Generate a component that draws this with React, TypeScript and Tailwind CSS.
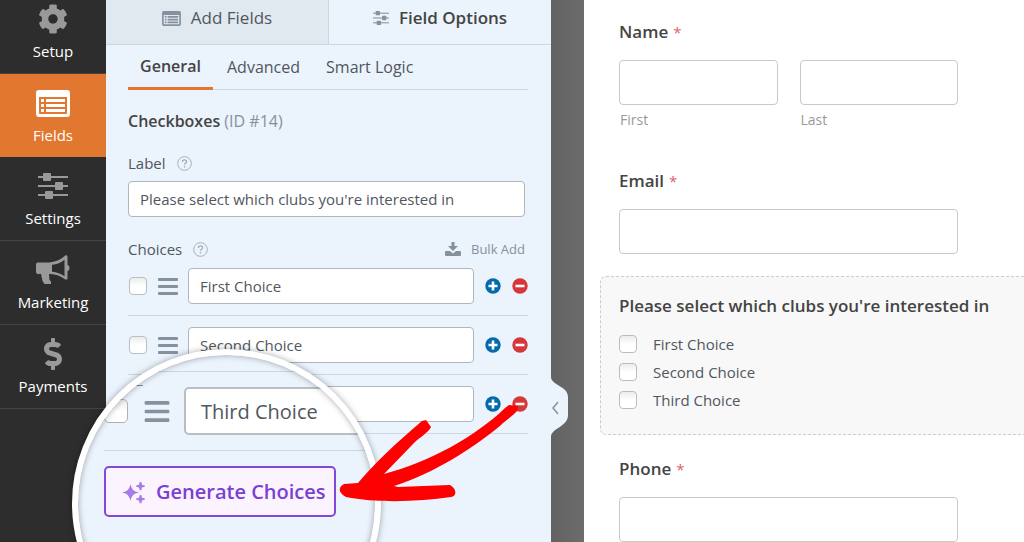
import { ReactNode } from "react";
import { FaCog, FaDollarSign } from "react-icons/fa";

const choices = ["First Choice", "Second Choice", "Third Choice"];

function SlidersIcon({ className }: { className?: string }) {
  return (
    <svg viewBox="0 0 30 26" fill="currentColor" className={className} aria-hidden="true">
      <rect x="0" y="3" width="30" height="2" />
      <rect x="0" y="12" width="30" height="2" />
      <rect x="0" y="21" width="30" height="2" />
      <rect x="5" y="0" width="8" height="8" rx="1" />
      <rect x="17" y="9" width="8" height="8" rx="1" />
      <rect x="7" y="18" width="8" height="8" rx="1" />
    </svg>
  );
}

function ListIcon({ className }: { className?: string }) {
  return (
    <svg viewBox="0 0 34 27" fill="currentColor" className={className} aria-hidden="true">
      <path
        fillRule="evenodd"
        d="M3 0h28a3 3 0 0 1 3 3v21a3 3 0 0 1-3 3H3a3 3 0 0 1-3-3V3a3 3 0 0 1 3-3zM3 7v16a1 1 0 0 0 1 1h26a1 1 0 0 0 1-1V7z"
      />
      <path d="M5 9h3v3H5zM10 9h19v3H10zM5 14h3v3H5zM10 14h19v3H10zM5 19h3v3H5zM10 19h19v3H10z" />
    </svg>
  );
}

function MegaphoneIcon({ className }: { className?: string }) {
  return (
    <svg viewBox="0 0 34 30" fill="currentColor" className={className} aria-hidden="true">
      <path d="M2 7.500h13v11.500h-2l.5 6 1.500 1.500V29H8.500L6.500 26 5 19H2a2 2 0 0 1-2-2V9.500a2 2 0 0 1 2-2z" />
      <path
        fillRule="evenodd"
        d="M14 7.500C20 6.500 25 4.500 29 .7c1-.9 2.500-.3 2.500 1v8.300c1.300.2 2 1.500 2 3s-.7 2.800-2 3v7.300c0 1.300-1.500 1.900-2.500 1C25 21 20 19.500 14 19zM16 9.800v6.900c5 .6 9 2 12.500 4.600V4.700C25 7.500 21 9.200 16 9.800z"
      />
    </svg>
  );
}

function BarsIcon({ className }: { className?: string }) {
  return (
    <svg viewBox="0 0 20 17" fill="currentColor" className={className} aria-hidden="true">
      <rect y="0" width="20" height="3" rx="1" />
      <rect y="7" width="20" height="3" rx="1" />
      <rect y="14" width="20" height="3" rx="1" />
    </svg>
  );
}

function HelpIcon() {
  return (
    <svg viewBox="0 0 16 16" className="size-[15px] text-[#a3abb5]" fill="none" stroke="currentColor" aria-hidden="true">
      <circle cx="8" cy="8" r="7.300" />
      <path d="M5.800 6.300c0-1.400 1-2.200 2.200-2.200s2.200.8 2.200 2c0 1.500-2.200 1.600-2.200 3.200" strokeWidth="1.400" />
      <circle cx="8" cy="11.500" r=".5" fill="currentColor" />
    </svg>
  );
}

function DownloadIcon() {
  return (
    <svg viewBox="0 0 16 14" className="h-[14px] w-4" fill="currentColor" aria-hidden="true">
      <path d="M6.500 0h3v4H13L8 9 3 4h3.500z" />
      <path d="M1 9h4l3 2.500L11 9h4a1 1 0 0 1 1 1v3a1 1 0 0 1-1 1H1a1 1 0 0 1-1-1v-3a1 1 0 0 1 1-1z" />
    </svg>
  );
}

function SparkleIcon() {
  return (
    <svg viewBox="0 0 24 24" className="size-6 shrink-0 text-[#a77be8]" fill="currentColor" aria-hidden="true">
      <path d="M8.500 4C9.500 9 11.500 11.500 17 12.500 11.500 13.500 9.500 16 8.500 21 7.500 16 5.500 13.500 0 12.500 5.500 11.500 7.500 9 8.500 4z" />
      <path d="M17.700 2h1.600l.7 2.800 2.800.7v1.300l-2.800.7-.7 2.700h-1.600L17 7.500l-2.800-.7V5.500l2.800-.7z" />
      <path d="M17.700 15h1.600l.7 2.800 2.800.7v1.300l-2.800.7-.7 2.700h-1.600l-.7-2.700-2.800-.7v-1.300l2.800-.7z" />
    </svg>
  );
}

function NavItem({ label, active, children }: { label: string; active?: boolean; children: ReactNode }) {
  return (
    <a
      href="#"
      className={
        active
          ? "flex h-[83px] flex-col items-center bg-[#e27730] pt-[13px] text-white"
          : "flex h-[84px] flex-col items-center border-b border-[#444] pt-[13px] text-[#999]"
      }
    >
      <span className="flex h-8 items-center">{children}</span>
      <span className="mt-1 text-[15px] leading-6 text-white">{label}</span>
    </a>
  );
}

function Checkbox({ label }: { label: string }) {
  return (
    <input
      type="checkbox"
      aria-label={label}
      className="size-[18px] shrink-0 appearance-none rounded-[4px] border border-[#b9bec4] bg-linear-to-b from-[#ececec] to-white to-50%"
    />
  );
}

function ChoiceRow({ label }: { label: string }) {
  return (
    <li className="flex h-[59px] items-center border-b border-[#ced7e0] pl-px">
      <Checkbox label={"Default " + label} />
      <BarsIcon className="ml-[11px] h-[17px] w-5 shrink-0 text-[#86919e]" />
      <input
        type="text"
        aria-label="Choice"
        defaultValue={label}
        className="ml-[10px] h-9 min-w-0 flex-1 rounded-[4px] border border-[#b0b6bd] bg-white px-[11px] text-[15px]"
      />
      <button type="button" aria-label="Add choice" className="ml-[11px]">
        <svg viewBox="0 0 16 16" className="size-4">
          <circle cx="8" cy="8" r="7.700" fill="#036aab" />
          <path d="M8 3.500v9M3.500 8h9" stroke="#fff" strokeWidth="2.600" />
        </svg>
      </button>
      <button type="button" aria-label="Remove choice" className="ml-[11px]">
        <svg viewBox="0 0 16 16" className="size-4">
          <circle cx="8" cy="8" r="7.700" fill="#d63638" />
          <path d="M3.500 8h9" stroke="#fff" strokeWidth="2.600" />
        </svg>
      </button>
    </li>
  );
}

function Magnifier() {
  return (
    <div className="absolute top-[349px] left-[72px] size-[309px] overflow-hidden rounded-full border-6 border-white bg-[#ebf3fc] shadow-[0_0_6px_rgba(0,0,0,0.35)]">
      <div className="mt-[16px] ml-[26px] w-[320px]">
        <div className="flex h-20 items-center border-y border-[#ced7e0]">
          <input
            type="checkbox"
            aria-label="Default third choice"
            className="size-6 shrink-0 appearance-none rounded-[5px] border border-[#b0b0b0] bg-linear-to-b from-[#ececec] to-white to-50%"
          />
          <BarsIcon className="ml-4 h-[21px] w-[26px] shrink-0 text-[#86919e]" />
          <input
            type="text"
            aria-label="Third choice"
            defaultValue="Third Choice"
            className="ml-[14px] h-12 w-[240px] shrink-0 rounded-[5px] border-2 border-[#b9bec4] bg-white px-[15px] text-[20px]"
          />
        </div>
        <button
          type="button"
          className="mt-[15px] flex h-[51px] w-[232px] items-center gap-[10px] rounded-[5px] border-2 border-[#8348d8] bg-[#fbf3fe] pl-4 text-[20px] font-semibold whitespace-nowrap text-[#7a3fd3]"
        >
          <SparkleIcon />
          Generate Choices
        </button>
      </div>
      {/* end of the drag handle of the row above */}
      <div className="absolute top-[25px] left-[57px] h-[6px] w-2 border-y border-[#86919e]" />
      <div className="pointer-events-none absolute inset-0 rounded-full shadow-[inset_0_0_6px_rgba(0,0,0,0.35)]" />
    </div>
  );
}

function Arrow() {
  return (
    <svg viewBox="0 0 180 100" className="pointer-events-none absolute top-[403px] left-[338px] h-[100px] w-[180px]" fill="#fe0000" aria-hidden="true">
      <path d="M84 18 88 17 93 24C90 30 82 34 76 40L46 71C91 59 137 34 167 5L171 2 180 3C183 8 168 17 163 22C133 47 96 70 56 83L60 84 112 82C119 86 119 93 113 94C79 99 38 100 8 94C0 90 0 84 6 81L20 80C36 61 59 39 84 18Z" />
    </svg>
  );
}

function TextField({ label, sublabel }: { label: string; sublabel?: string }) {
  return (
    <label className="block min-w-0 flex-1">
      <input
        type="text"
        aria-label={label}
        className="block h-[45px] w-full rounded-[4px] border border-[#c9c9c9] bg-white px-3 text-[15px]"
      />
      {sublabel ? <span className="mt-[3px] block pl-px text-[14px] leading-6 text-[#999]">{sublabel}</span> : null}
    </label>
  );
}

function FieldTitle({ children, required }: { children: ReactNode; required?: boolean }) {
  return (
    <h3 className="text-[17px] leading-6 font-semibold text-[#444]">
      {children}
      {required ? <span className="ml-[5px] text-[15px] font-normal text-[#e0606a]">*</span> : null}
    </h3>
  );
}

export default function App() {
  return (
    <div className="relative flex h-screen overflow-hidden bg-[#676767] font-['Open_Sans','Noto_Sans',sans-serif] text-[#50575e]">
      <nav className="w-[106px] shrink-0 bg-[#2d2d2d]">
        <div className="-mt-[10px]">
          <NavItem label="Setup">
            <FaCog className="size-[30px]" />
          </NavItem>
          <NavItem label="Fields" active>
            <ListIcon className="h-[27px] w-[34px]" />
          </NavItem>
          <NavItem label="Settings">
            <SlidersIcon className="h-[26px] w-[30px]" />
          </NavItem>
          <NavItem label="Marketing">
            <MegaphoneIcon className="h-[30px] w-[34px]" />
          </NavItem>
          <NavItem label="Payments">
            <FaDollarSign className="size-8" />
          </NavItem>
        </div>
      </nav>

      <section className="w-[445px] shrink-0 bg-[#ebf3fc]">
        <div className="flex h-[45px] border-b border-[#ced7e0] text-[17px]">
          <button type="button" className="flex flex-1 items-center justify-center gap-[10px] border-r border-[#ced7e0] bg-[#e0e8f0] pb-2">
            <ListIcon className="h-[15px] w-[19px] text-[#86919e]" />
            Add Fields
          </button>
          <button type="button" className="flex flex-1 items-center justify-center gap-[10px] pb-2 font-semibold text-[#444]">
            <SlidersIcon className="h-[14px] w-4 text-[#86919e]" />
            Field Options
          </button>
        </div>

        <div className="pr-[23px] pl-[22px]">
          <div className="flex h-[45px] border-b border-[#ced7e0] text-[16px]">
            <button type="button" className="-mb-px w-[85px] border-b-3 border-[#e27730] font-semibold text-[#444]">
              General
            </button>
            <button type="button" className="ml-[14px]">Advanced</button>
            <button type="button" className="ml-[26px]">Smart Logic</button>
          </div>

          <h2 className="mt-[19px] text-[16px] leading-6 font-semibold text-[#444]">
            Checkboxes <span className="font-normal text-[#86919e]">(ID #14)</span>
          </h2>

          <div className="mt-[18px] flex items-center gap-[11px] text-[15px] leading-6">
            <label htmlFor="field-label">Label</label>
            <HelpIcon />
          </div>
          <div className="mt-[6px] pr-[3px]">
            <input
              id="field-label"
              type="text"
              defaultValue="Please select which clubs you're interested in"
              className="block h-9 w-full rounded-[4px] border border-[#b0b6bd] bg-white px-[11px] text-[15px]"
            />
          </div>

          <div className="mt-5 flex items-center gap-[11px] pr-[3px] text-[15px] leading-6">
            <span>Choices</span>
            <HelpIcon />
            <button type="button" className="ml-auto flex items-center gap-[10px] text-[13px] text-[#86919e]">
              <DownloadIcon />
              Bulk Add
            </button>
          </div>
          <ul className="-mt-[4px]">
            {choices.map((choice) => (
              <ChoiceRow key={choice} label={choice} />
            ))}
          </ul>
        </div>
      </section>

      <div className="w-[33px] shrink-0 bg-linear-to-r from-[#626262] to-[#6c6c6c] pt-[377px]">
        <button type="button" aria-label="Collapse panel" className="block">
          <svg viewBox="0 0 18 60" className="h-[60px] w-[18px]" fill="none">
            <path d="M0 0C0 8 17 9 17 20V38C17 50 0 51 0 60Z" fill="#ebf3fc" />
            <path d="M7 25 2 31l5 6" stroke="#86919e" strokeWidth="1.500" />
          </svg>
        </button>
      </div>

      <main className="min-w-0 flex-1 bg-white pt-5 pl-4">
        <div className="px-[19px]">
          <FieldTitle required>Name</FieldTitle>
          <div className="mt-4 flex max-w-[339px] gap-[22px]">
            <TextField label="First name" sublabel="First" />
            <TextField label="Last name" sublabel="Last" />
          </div>
          <div className="mt-[37px]">
            <FieldTitle required>Email</FieldTitle>
            <div className="mt-4 flex max-w-[339px]">
              <TextField label="Email" />
            </div>
          </div>
        </div>

        <div className="mt-[22px] h-[159px] rounded-l-[6px] border border-r-0 border-dashed border-[#ccc] bg-[#f8f8f8] px-[18px] pt-[17px]">
          <FieldTitle>Please select which clubs you're interested in</FieldTitle>
          <ul className="mt-3 text-[15px] leading-7">
            {choices.map((choice) => (
              <li key={choice}>
                <label className="flex h-7 items-center gap-4">
                  <Checkbox label={choice} />
                  {choice}
                </label>
              </li>
            ))}
          </ul>
        </div>

        <div className="mt-[22px] px-[19px]">
          <FieldTitle required>Phone</FieldTitle>
          <div className="mt-4 flex max-w-[339px]">
            <TextField label="Phone" />
          </div>
        </div>
      </main>

      <Magnifier />
      <Arrow />
    </div>
  );
}
